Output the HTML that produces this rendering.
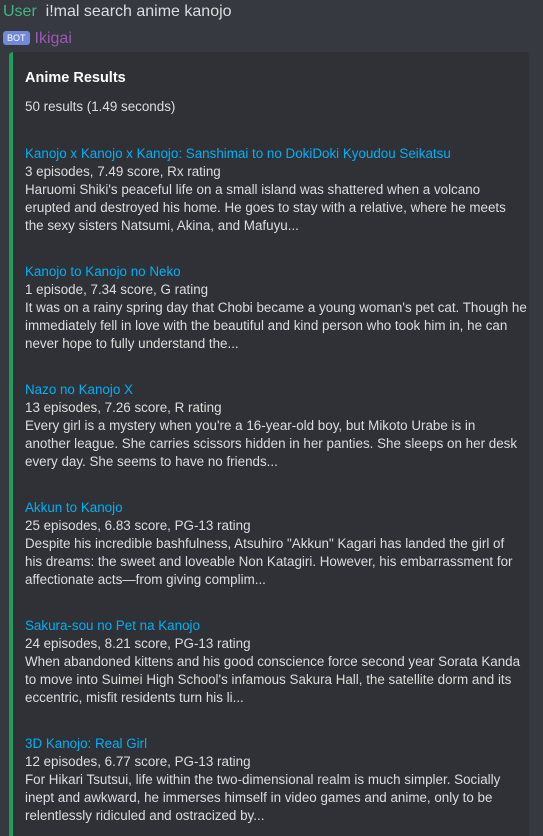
<!DOCTYPE html>
<html><head><meta charset="utf-8"><style>
html,body{margin:0;width:543px;height:836px;overflow:hidden;}
body{background:#36393f;font-family:"Liberation Sans",sans-serif;color:#dcddde;position:relative;}
.l1{position:absolute;left:3px;top:3px;font-size:16px;}
.user{color:#43b581;}
.l2{position:absolute;left:3px;top:30px;font-size:16px;}
.bot{display:inline-block;background:#7289da;color:#fff;font-size:9px;padding:2px 4px;border-radius:3px;vertical-align:2px;}
.ik{color:#9b59b6;margin-left:5px;}
.embed{position:absolute;left:9px;top:52px;width:520px;height:800px;background:#2f3136;border-left:4px solid #1f9d5c;border-radius:4px;box-sizing:border-box;}
.t{position:absolute;left:12px;top:18px;font-weight:bold;color:#fff;font-size:14.5px;}
.d{position:absolute;left:12px;top:47px;font-size:13.4px;}
.r{position:absolute;left:12px;font-size:13.4px;line-height:18px;white-space:nowrap;}
.r a{color:#00b0f4;text-decoration:none;}
</style></head><body>
<div class="l1"><span class="user">User</span>&nbsp; i!mal search anime kanojo</div>
<div class="l2"><span class="bot">BOT</span><span class="ik">Ikigai</span></div>
<div class="embed">
<div class="t">Anime Results</div>
<div class="d">50 results (1.49 seconds)</div>
<div class="r" style="top:93px"><a>Kanojo x Kanojo x Kanojo: Sanshimai to no DokiDoki Kyoudou Seikatsu</a><br>3 episodes, 7.49 score, Rx rating<br>Haruomi Shiki's peaceful life on a small island was shattered when a volcano<br>erupted and destroyed his home. He goes to stay with a relative, where he meets<br>the sexy sisters Natsumi, Akina, and Mafuyu...</div>
<div class="r" style="top:211px"><a>Kanojo to Kanojo no Neko</a><br>1 episode, 7.34 score, G rating<br>It was on a rainy spring day that Chobi became a young woman's pet cat. Though he<br>immediately fell in love with the beautiful and kind person who took him in, he can<br>never hope to fully understand the...</div>
<div class="r" style="top:329px"><a>Nazo no Kanojo X</a><br>13 episodes, 7.26 score, R rating<br>Every girl is a mystery when you're a 16-year-old boy, but Mikoto Urabe is in<br>another league. She carries scissors hidden in her panties. She sleeps on her desk<br>every day. She seems to have no friends...</div>
<div class="r" style="top:447px"><a>Akkun to Kanojo</a><br>25 episodes, 6.83 score, PG-13 rating<br>Despite his incredible bashfulness, Atsuhiro "Akkun" Kagari has landed the girl of<br>his dreams: the sweet and loveable Non Katagiri. However, his embarrassment for<br>affectionate acts—from giving complim...</div>
<div class="r" style="top:565px"><a>Sakura-sou no Pet na Kanojo</a><br>24 episodes, 8.21 score, PG-13 rating<br>When abandoned kittens and his good conscience force second year Sorata Kanda<br>to move into Suimei High School's infamous Sakura Hall, the satellite dorm and its<br>eccentric, misfit residents turn his li...</div>
<div class="r" style="top:683px"><a>3D Kanojo: Real Girl</a><br>12 episodes, 6.77 score, PG-13 rating<br>For Hikari Tsutsui, life within the two-dimensional realm is much simpler. Socially<br>inept and awkward, he immerses himself in video games and anime, only to be<br>relentlessly ridiculed and ostracized by...</div>
</div>
</body></html>
